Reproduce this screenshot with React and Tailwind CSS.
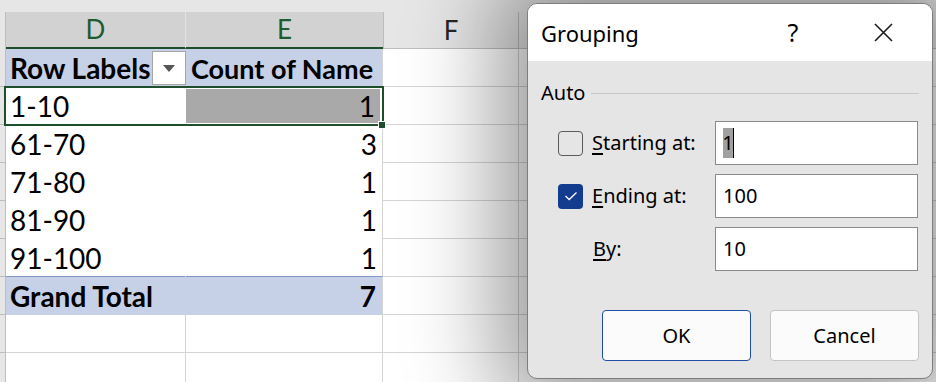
import React from "react";

function Row({ label, val, first, last }) {
  return (
    <div className="flex h-[38px]">
      <div className="w-[6px] bg-[#e6e6e6] border-r border-b border-[#bdbdbd]" />
      <div className={"w-[180px] flex items-center pl-[4px] text-[28px] leading-none bg-white border-r border-transparent " + (last ? "border-b border-b-[#8197c9]" : "")}>
        {label}
      </div>
      <div className={"w-[197px] flex items-center justify-end text-[28px] leading-none border-r border-[#d4d4d4] " + (last ? "border-b border-b-[#8197c9]" : "")}>
        {first ? (
          <div className="w-[194px] h-[34px] bg-[#a9a9a9] flex items-center justify-end pr-[5px] mr-[2px]">{val}</div>
        ) : (
          <span className="pr-[5px]">{val}</span>
        )}
      </div>
      <div className="w-[136px] border-r border-b border-[#d4d4d4]" />
      <div className="flex-1 border-b border-[#d4d4d4]" />
    </div>
  );
}

function EmptyRow() {
  return (
    <div className="flex h-[38px]">
      <div className="w-[6px] bg-[#e6e6e6] border-r border-b border-[#bdbdbd]" />
      <div className="w-[180px] border-r border-b border-[#d4d4d4]" />
      <div className="w-[197px] border-r border-b border-[#d4d4d4]" />
      <div className="w-[136px] border-r border-b border-[#d4d4d4]" />
      <div className="flex-1 border-b border-[#d4d4d4]" />
    </div>
  );
}

export default function App() {
  const rows = [
    { label: "1-10", val: "1", first: true },
    { label: "61-70", val: "3" },
    { label: "71-80", val: "1" },
    { label: "81-90", val: "1" },
    { label: "91-100", val: "1", last: true },
  ];
  return (
    <div className="relative w-[936px] h-[382px] overflow-hidden bg-white font-['Lato',sans-serif] text-black">
      <div className="h-[12px] bg-[#e6e6e6]" />
      {/* column headers */}
      <div className="flex h-[37px]">
        <div className="w-[6px] bg-[#e6e6e6] border-r border-[#bdbdbd]" />
        <div className="w-[180px] bg-[#d2d2d2] border-r border-r-[#e2e2e2] border-b-2 border-b-[#1f4e2c] flex items-center justify-center text-[26px] text-[#1e5b31]">
          D
        </div>
        <div className="w-[197px] bg-[#d2d2d2] border-b-2 border-b-[#1f4e2c] flex items-center justify-center text-[26px] text-[#1e5b31]">
          E
        </div>
        <div className="w-[136px] bg-[#e6e6e6] border-l border-r border-b border-[#bdbdbd] flex items-center justify-center text-[26px] text-[#262626]">
          F
        </div>
        <div className="flex-1 bg-[#e6e6e6] border-b border-[#bdbdbd]" />
      </div>
      {/* pivot header row */}
      <div className="flex h-[38px]">
        <div className="w-[6px] bg-[#e6e6e6] border-r border-b border-[#bdbdbd]" />
        <div className="w-[180px] bg-[#c6d0e6] flex items-center pl-[4px] text-[28px] leading-none font-bold">
          <span className="flex-1">Row Labels</span>
          <div className="w-[34px] h-[34px] bg-white border border-[#a6a6a6] flex items-center justify-center">
            <svg width="12" height="7" viewBox="0 0 12 7">
              <polygon points="0,0 12,0 6,7" fill="#555" />
            </svg>
          </div>
        </div>
        <div className="w-[197px] bg-[#c6d0e6] flex items-center pl-[5px] text-[27px] leading-none font-bold border-r border-[#d4d4d4]">
          Count of Name
        </div>
        <div className="w-[136px] border-r border-b border-[#d4d4d4]" />
        <div className="flex-1 border-b border-[#d4d4d4]" />
      </div>
      {rows.map((r) => (
        <Row key={r.label} {...r} />
      ))}
      {/* grand total */}
      <div className="flex h-[38px]">
        <div className="w-[6px] bg-[#e6e6e6] border-r border-b border-[#bdbdbd]" />
        <div className="w-[377px] bg-[#c6d0e6] flex items-center justify-between pl-[4px] pr-[6px] text-[28px] leading-none font-bold border-r border-[#d4d4d4]">
          <span>Grand Total</span>
          <span>7</span>
        </div>
        <div className="w-[136px] border-r border-b border-[#d4d4d4]" />
        <div className="flex-1 border-b border-[#d4d4d4]" />
      </div>
      <EmptyRow />
      <EmptyRow />

      {/* selection */}
      <div className="absolute left-[4px] top-[86px] w-[380px] h-[40px] border-2 border-[#1f4e2c] pointer-events-none" />
      <div className="absolute left-[378px] top-[121px] w-[8px] h-[8px] bg-[#1f4e2c] border border-white" />

      {/* dialog */}
      <div className="absolute left-[527px] top-[3px] w-[406px] h-[376px] rounded-[10px] border border-[#7d7d7d] bg-[#e5e5e5] overflow-hidden shadow-[0_0_90px_30px_rgba(0,0,0,0.4)] flex flex-col font-['Noto_Sans',sans-serif] text-black">
        <div className="h-[57px] bg-white flex items-center shrink-0">
          <span className="w-[232px] pl-[13px] text-[22px] leading-none">Grouping</span>
          <span className="w-[66px] text-center text-[25px] leading-none">?</span>
          <svg className="ml-[48px]" width="19" height="19" viewBox="0 0 19 19">
            <path d="M1 1 L18 18 M18 1 L1 18" stroke="#1a1a1a" strokeWidth="1.6" />
          </svg>
        </div>
        <div className="flex-1 px-[13px] pt-[18px] flex flex-col">
          <div className="flex items-center h-[28px]">
            <span className="text-[20px] leading-none">Auto</span>
            <div className="flex-1 h-px bg-[#c8c8c8] ml-[6px]" />
          </div>
          <div className="mt-[14px] flex flex-col gap-[9px]">
            <div className="flex items-center h-[44px]">
              <div className="w-[174px] flex items-center pl-[17px] gap-[9px]">
                <div className="w-[25px] h-[25px] rounded-[4px] border-[1.5px] border-[#5a5a5a]" />
                <span className="text-[20px] leading-none">
                  <span className="underline underline-offset-[3px]">S</span>tarting at:
                </span>
              </div>
              <div className="w-[203px] h-[44px] bg-white border border-[#8a8a8a] flex items-center pl-[7px] text-[20px] leading-none">
                <span className="bg-[#a0a0a0] h-[30px] w-[10px] flex items-center justify-center">1</span>
                <span className="w-px h-[30px] bg-black" />
              </div>
            </div>
            <div className="flex items-center h-[44px]">
              <div className="w-[174px] flex items-center pl-[17px] gap-[9px]">
                <div className="w-[25px] h-[25px] rounded-[4px] bg-[#133b8e] flex items-center justify-center">
                  <svg width="14" height="10" viewBox="0 0 14 10">
                    <path d="M1.5 5 L5.2 8.5 L12.5 1.5" fill="none" stroke="white" strokeWidth="1.3" />
                  </svg>
                </div>
                <span className="text-[20px] leading-none">
                  <span className="underline underline-offset-[3px]">E</span>nding at:
                </span>
              </div>
              <div className="w-[203px] h-[44px] bg-white border border-[#8a8a8a] flex items-center pl-[7px] text-[20px] leading-none">
                100
              </div>
            </div>
            <div className="flex items-center h-[44px]">
              <div className="w-[174px] flex items-center pl-[52px]">
                <span className="text-[20px] leading-none">
                  <span className="underline underline-offset-[3px]">B</span>y:
                </span>
              </div>
              <div className="w-[203px] h-[44px] bg-white border border-[#8a8a8a] flex items-center pl-[7px] text-[20px] leading-none">
                10
              </div>
            </div>
          </div>
          <div className="mt-[39px] flex justify-end gap-[19px]">
            <button className="w-[149px] h-[51px] rounded-[4px] bg-[#fbfbfb] border border-[#1f4fa5] text-[20px] leading-none">
              OK
            </button>
            <button className="w-[149px] h-[51px] rounded-[4px] bg-[#fbfbfb] border border-[#c4c4c4] text-[20px] leading-none">
              Cancel
            </button>
          </div>
        </div>
      </div>
    </div>
  );
}
